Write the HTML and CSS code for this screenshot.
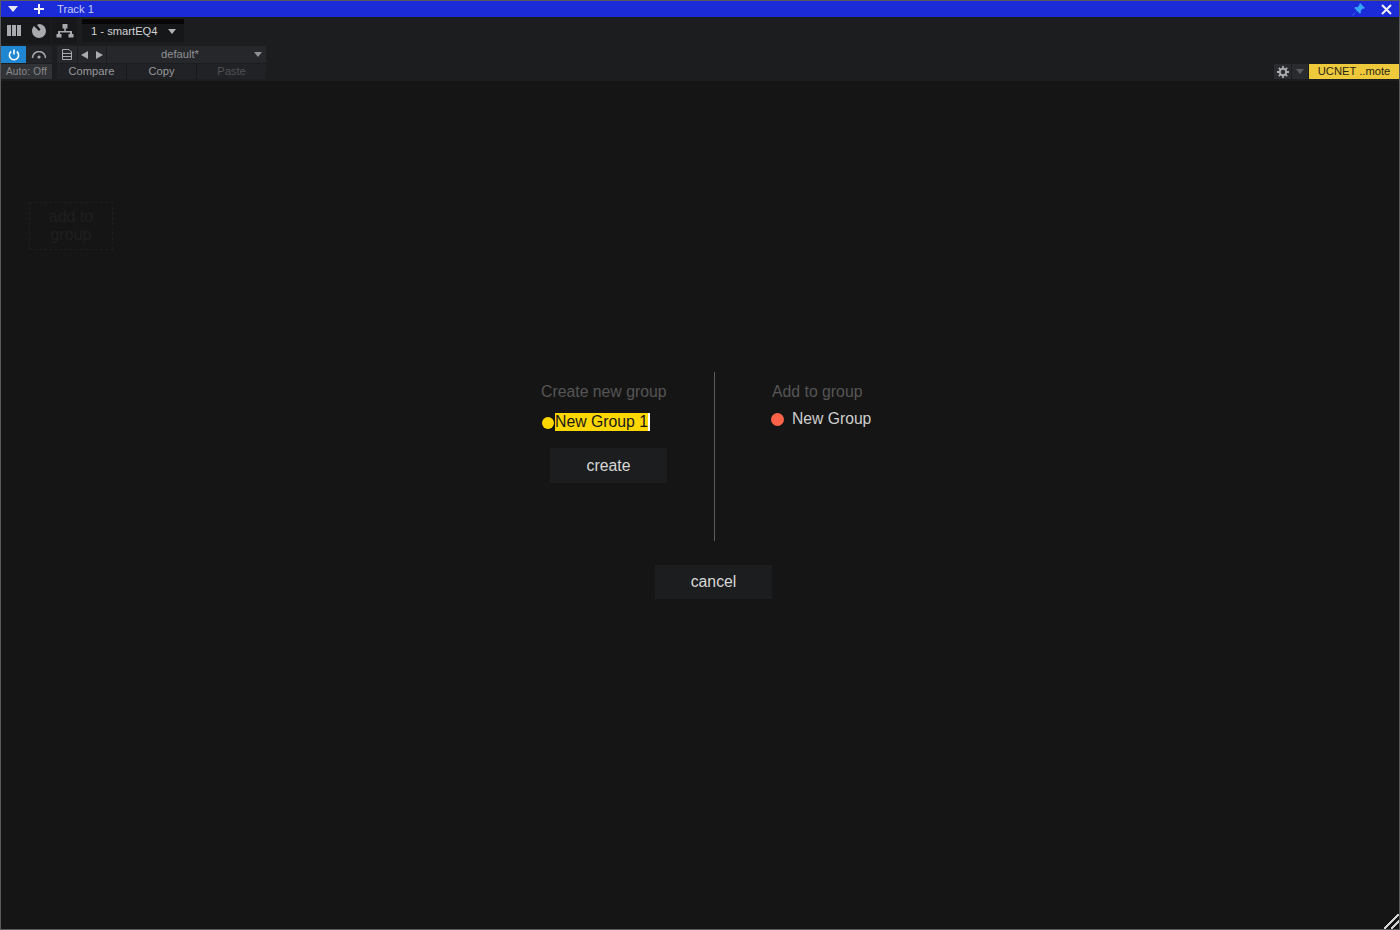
FILE: index.html
```html
<!DOCTYPE html>
<html lang="en">
<head>
<meta charset="utf-8">
<title>Track 1</title>
<link rel="stylesheet" href="styles.css">
</head>
<body>
<div class="window">
  <header class="titlebar">
    <svg class="tb-arrow" width="10" height="6" viewBox="0 0 10 6"><path d="M0 0h10L5 6z" fill="#e8e8f4"/></svg>
    <svg class="tb-plus" width="10" height="10" viewBox="0 0 10 10"><path d="M4 0h2v4h4v2H6v4H4V6H0V4h4z" fill="#f0f0fa"/></svg>
    <span class="tb-title">Track 1</span>
    <span class="spacer"></span>
    <svg class="tb-pin" width="13" height="13" viewBox="0 0 13 13"><path d="M8 0l5 5-1.300.8-.8-.3-2.200 2.200.2 2-1 1L5 7.800 1 12.500.5 12 5.200 8 2.300 5.100l1-1 2 .2 2.200-2.200-.3-.8z" fill="#37a5f5"/></svg>
    <svg class="tb-close" width="11" height="11" viewBox="0 0 11 11"><path d="M1 1l9 9M10 1l-9 9" stroke="#f2f2fa" stroke-width="2"/></svg>
  </header>

  <section class="toolbar">
    <div class="row-top">
      <div class="icon-cell">
        <svg width="14" height="11" viewBox="0 0 14 11"><path d="M0 0h4v11H0zM5 0h4v11H5zM10 0h4v11h-4z" fill="#a8aaad"/></svg>
      </div>
      <div class="icon-cell">
        <svg width="14" height="14" viewBox="0 0 14 14"><path d="M7 0a7 7 0 1 1-7 7c0-2 .8-3.700 2-5l5 5 1.500-1.500L5 1a7 7 0 0 1 2-1z" fill="#a8aaad"/></svg>
      </div>
      <div class="icon-cell">
        <svg width="18" height="14" viewBox="0 0 18 14"><path d="M6.500 0h5v4.500h-1.700V7H16v3h1.500v3.500h-5V10H14V8.500H4V10h1.500v3.500h-5V10H2V7h6.200V4.500H6.500z" fill="#a8aaad"/></svg>
      </div>
      <div class="slot">
        <div class="slot-bar"></div>
        <div class="slot-label">
          <span>1 - smartEQ4</span>
          <svg width="8" height="5" viewBox="0 0 8 5"><path d="M0 0h8L4 5z" fill="#b0b2b5"/></svg>
        </div>
      </div>
    </div>
    <div class="row-bottom">
      <div class="group-left">
        <div class="controls">
          <div class="power">
            <svg width="12" height="12" viewBox="0 0 12 12"><path d="M3.200 2.500a4.600 4.600 0 1 0 5.600 0" fill="none" stroke="#fff" stroke-width="1.600"/><path d="M6 .5v5" stroke="#fff" stroke-width="1.600"/></svg>
          </div>
          <div class="bypass">
            <svg width="16" height="8" viewBox="0 0 16 8"><path d="M1.500 7a6.500 6.500 0 0 1 13 0" fill="none" stroke="#a8aaad" stroke-width="1.500"/><circle cx="8" cy="6" r="1.600" fill="#a8aaad"/></svg>
          </div>
          <div class="auto">Auto: Off</div>
        </div>
        <div class="presets">
          <div class="preset-row">
            <div class="p-doc">
              <svg width="10" height="11" viewBox="0 0 10 11"><path d="M.5.500h6.500l2.500 2.500v7.500h-9zM1 4.500h8M1 7.500h8" fill="none" stroke="#a9abae"/></svg>
            </div>
            <div class="p-arrows">
              <svg width="7" height="8" viewBox="0 0 7 8"><path d="M7 0v8L0 4z" fill="#a9abae"/></svg>
              <svg width="7" height="8" viewBox="0 0 7 8"><path d="M0 0v8l7-4z" fill="#a9abae"/></svg>
            </div>
            <div class="p-name">
              <span>default*</span>
              <svg width="8" height="5" viewBox="0 0 8 5"><path d="M0 0h8L4 5z" fill="#8f9194"/></svg>
            </div>
          </div>
          <div class="preset-actions">
            <span class="act act-compare">Compare</span>
            <span class="act act-copy">Copy</span>
            <span class="act act-paste">Paste</span>
          </div>
        </div>
      </div>
      <span class="spacer"></span>
      <div class="group-right">
        <div class="gear">
          <svg width="12" height="12" viewBox="0 0 12 12"><circle cx="6" cy="6" r="3.200" fill="none" stroke="#a9abae" stroke-width="2"/><path d="M6 0v2.500M6 9.500V12M0 6h2.500M9.500 6H12M1.800 1.800l1.800 1.800M8.400 8.400l1.800 1.800M10.200 1.800L8.400 3.600M3.600 8.400l-1.800 1.800" stroke="#a9abae" stroke-width="1.800"/></svg>
        </div>
        <div class="gear-menu">
          <svg width="8" height="5" viewBox="0 0 8 5"><path d="M0 0h8L4 5z" fill="#5a5c5f"/></svg>
        </div>
        <div class="ucnet">UCNET ..mote</div>
      </div>
    </div>
  </section>

  <main class="content">
    <div class="ghost">add to group</div>
    <div class="dialog">
      <div class="columns">
        <div class="col-create">
          <div class="col-title">Create new group</div>
          <div class="name-row">
            <span class="dot dot-yellow"></span>
            <span class="name-input"><span class="selected">New Group 1</span></span>
          </div>
          <button class="btn btn-create" type="button">create</button>
        </div>
        <div class="col-add">
          <div class="col-title">Add to group</div>
          <div class="group-item">
            <span class="dot dot-orange"></span>
            <span>New Group</span>
          </div>
        </div>
      </div>
      <button class="btn btn-cancel" type="button">cancel</button>
    </div>
    <svg class="grip" width="15" height="15" viewBox="0 0 15 15"><path d="M0 15L15 0M7 15l8-8" stroke="#d4d4d4" stroke-width="2"/></svg>
  </main>
</div>
</body>
</html>
```

FILE: styles.css
```css
* { box-sizing: border-box; }
html, body { margin: 0; height: 100%; background: #151515; }
body { font-family: "Liberation Sans", Arial, sans-serif; overflow: hidden; }

.window {
  width: 1400px;
  height: 930px;
  border: 1px solid #5a5a5c;
  display: flex;
  flex-direction: column;
  background: #151515;
}

.titlebar {
  height: 16px;
  background: #1c2bd8;
  display: flex;
  align-items: center;
  flex: none;
  color: #c3cbf2;
  font-size: 11.2px;
}
.tb-arrow { margin-left: 7px; }
.tb-plus { margin-left: 16px; }
.tb-title { margin-left: 13px; }
.tb-pin { margin-right: 16px; }
.tb-close { margin-right: 7px; }
.spacer { flex: 1; }

.toolbar {
  height: 64px;
  flex: none;
  background: #1c1d1f;
  display: flex;
  flex-direction: column;
  color: #a9abae;
  font-size: 11.2px;
}
.row-top { height: 29px; display: flex; flex: none; }
.icon-cell {
  width: 25px;
  height: 27px;
  background: #17181a;
  display: flex;
  align-items: center;
  justify-content: center;
}
.icon-cell:nth-child(3) { margin-left: 1px; }
.slot { margin-left: 5px; width: 102px; padding-top: 2px; }
.slot-bar { height: 5px; background: #060607; }
.slot-label {
  height: 18px;
  background: #161719;
  display: flex;
  align-items: center;
  padding: 0 0 4px 9px;
  gap: 10px;
  color: #d2d3d5;
}

.row-bottom { display: flex; height: 35px; }
.group-left { display: flex; }
.controls {
  width: 51px;
  height: 33px;
  display: grid;
  grid-template-columns: 25px 26px;
  grid-template-rows: 17px 15px;
  row-gap: 1px;
}
.power { background: #1f87d1; display: flex; align-items: center; justify-content: center; }
.bypass { background: #232427; display: flex; align-items: center; justify-content: center; }
.auto {
  grid-column: 1 / 3;
  background: #323336;
  color: #8a8c8f;
  font-size: 10px;
  display: flex;
  align-items: center;
  justify-content: center;
  letter-spacing: .2px;
}
.presets { margin-left: 5px; width: 209px; display: flex; flex-direction: column; }
.preset-row { height: 17px; margin-bottom: 1px; display: flex; gap: 1px; }
.p-doc { width: 20px; background: #26272a; display: flex; align-items: center; justify-content: center; }
.p-arrows { width: 28px; background: #26272a; display: flex; align-items: center; justify-content: center; gap: 8px; }
.p-name {
  flex: 1;
  background: #26272a;
  display: flex;
  align-items: center;
  padding: 0 4px 1px 54px;
  justify-content: space-between;
  color: #8f9194;
}
.preset-actions { height: 15px; display: flex; gap: 1px; background: #17181a; }
.act { flex: 1; background: #212225; text-align: center; line-height: 15px; color: #97999c; }
.act-paste { color: #505255; }

.group-right { display: flex; align-self: flex-end; height: 15px; margin-bottom: 2px; gap: 1px; }
.gear { width: 17px; background: #2a2b2e; display: flex; align-items: center; justify-content: center; }
.gear-menu { width: 16px; background: #2a2b2e; display: flex; align-items: center; justify-content: center; }
.ucnet {
  width: 90px;
  background: #eec93c;
  color: #2a2616;
  text-align: center;
  line-height: 15px;
}

.content { flex: 1; position: relative; padding: 121px 0 0 28px; }
.ghost {
  width: 84px;
  height: 48px;
  border: 1px dashed #1e1e1f;
  color: #1f1f20;
  font-size: 16px;
  line-height: 18px;
  text-align: center;
  padding: 5px 16px;
}
.dialog { margin: 122px 0 0 512px; width: 400px; display: flex; flex-direction: column; }
.columns { display: flex; height: 169px; }
.col-create { width: 174px; border-right: 1px solid #5c5c5c; }
.col-add { padding-left: 57px; }
.col-title { color: #555; font-size: 15.8px; line-height: 18px; margin-top: 11px; }
.name-row { display: flex; align-items: center; margin-top: 12px; margin-left: 1px; }
.dot { border-radius: 50%; flex: none; display: block; }
.dot-yellow { width: 12px; height: 12px; background: #ffd700; margin-top: 2px; margin-right: 1px; }
.name-input { color: #1a1a1a; font-size: 15.8px; line-height: 18px; border-right: 2px solid #fff; }
.selected { background: #ffd700; display: block; }
.btn {
  display: block;
  width: 117px;
  height: 35px;
  border: 0;
  background: #1c1d1e;
  color: #d8d8d8;
  font: 15.8px "Liberation Sans", Arial, sans-serif;
  padding: 0;
}
.btn-create { margin: 17px 0 0 9px; }
.btn-cancel { margin: 24px 0 0 114px; height: 34px; }
.group-item { display: flex; align-items: center; gap: 8px; color: #cfcfcf; font-size: 15.7px; line-height: 18px; margin-top: 9px; }
.dot-orange { width: 13px; height: 13px; background: #ff6347; margin-left: -1px; }
.grip { position: absolute; right: 0; bottom: 0; shape-rendering: crispEdges; }
```
